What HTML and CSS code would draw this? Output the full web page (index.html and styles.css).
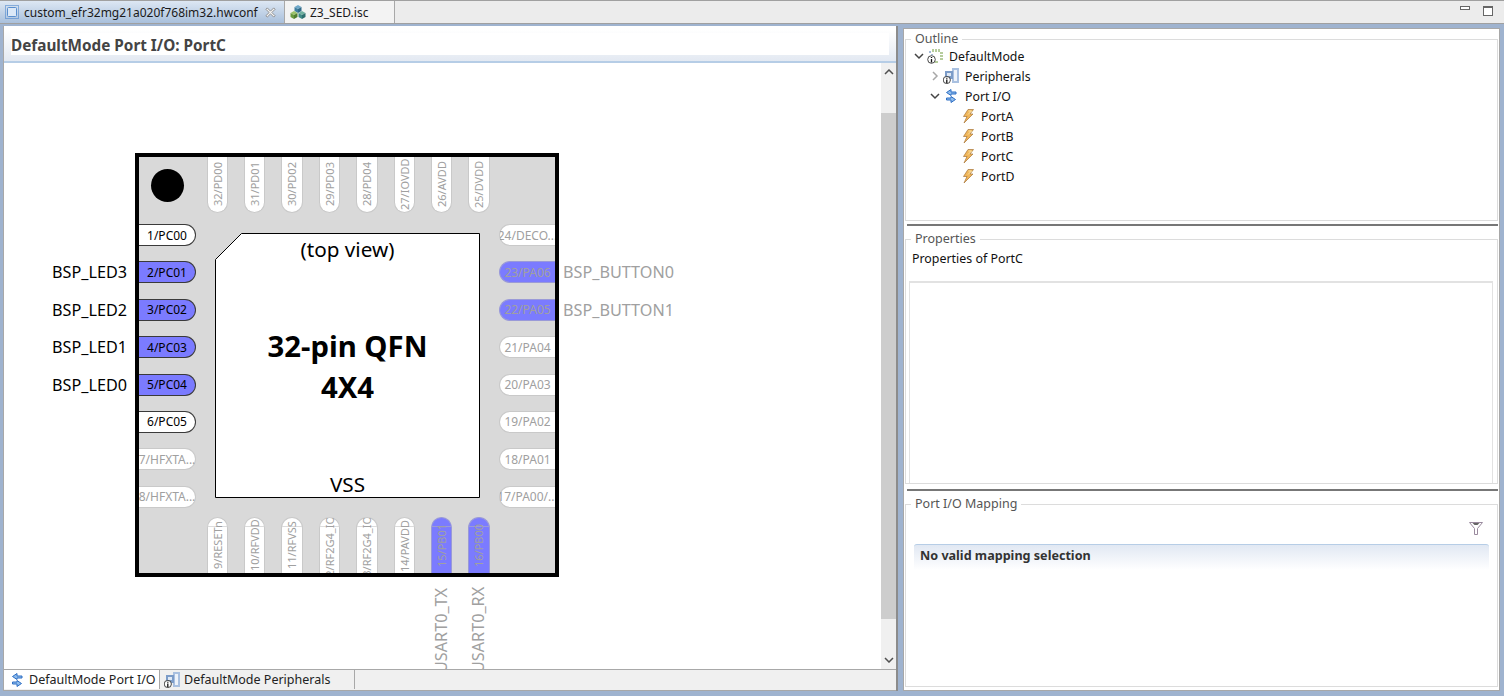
FILE: index.html
```html
<!DOCTYPE html>
<html lang="en">
<head>
<meta charset="utf-8">
<title>custom_efr32mg21a020f768im32.hwconf</title>
<link rel="stylesheet" href="styles.css">
</head>
<body>
<svg class="defs" width="0" height="0" aria-hidden="true">
  <symbol id="i-arrows" viewBox="0 0 16 16">
    <path d="M13 4H8V1.500L3.500 4.500 8 7.500V6h5z" fill="#8dbbec" stroke="#2f6fc4"/>
    <path d="M3.500 10H8V8.500L12.500 11.500 8 14.500V12H3.500z" fill="#8dbbec" stroke="#2f6fc4"/>
  </symbol>
  <symbol id="i-bolt" viewBox="0 0 16 16">
    <path d="M8 1.500h5.500L10 6h3L4 15l3-6.500H3.500z" fill="#f0b65a" stroke="#a8763a" stroke-width=".7"/>
    <path d="M8.500 3h3L8 6.500" fill="none" stroke="#f7e2a8"/>
  </symbol>
  <symbol id="i-periph" viewBox="0 0 16 16">
    <rect x="9" y="0" width="7" height="15" fill="#a9c0e0"/>
    <rect x="11" y="2" width="3" height="11" fill="#eef3fa"/>
    <rect x="2" y="3" width="8" height="8" fill="#7c9cc8"/>
    <rect x="4" y="5" width="4" height="3" fill="#dfe9f5"/>
    <circle cx="3.800" cy="12" r="3.600" fill="#fff" stroke="#333" stroke-width=".9"/>
    <path d="M3.800 9.800v1M3.800 11.500V15" stroke="#111" stroke-width="1.300"/>
  </symbol>
</svg>

<div class="app">
  <header class="tabbar">
    <div class="tab tab-active">
      <svg class="ico" viewBox="0 0 16 16"><rect x="1.500" y="1.500" width="13" height="13" fill="none" stroke="#3a7bc8" stroke-dasharray="1 1"/><rect x="3.500" y="3.500" width="9" height="9" rx="1" fill="#dbe8f7" stroke="#5a8fcf"/></svg>
      <span class="tab-text">custom_efr32mg21a020f768im32.hwconf</span>
      <svg class="close" viewBox="0 0 12 12"><path d="M2.500 1 6 4.500 9.500 1 11 2.500 7.500 6 11 9.500 9.500 11 6 7.500 2.500 11 1 9.500 4.500 6 1 2.500z" fill="#f4f4f4" stroke="#8a8a8a"/></svg>
    </div>
    <div class="tab tab-file">
      <svg class="ico" viewBox="0 0 16 16"><path d="M8 1l3.500 2L8 5 4.500 3z" fill="#6fa8c9"/><path d="M8 5v4L4.500 7V3z" fill="#3f7f9f"/><path d="M8 5l3.500-2v4L8 9z" fill="#2f6a88"/><path d="M4 7l3.500 2L4 11 .5 9z" fill="#9cc36a"/><path d="M4 11v4L.5 13V9z" fill="#6a9a3e"/><path d="M4 11l3.500-2v4L4 15z" fill="#4f7d2e"/><path d="M12 7l3.500 2L12 11 8.500 9z" fill="#6fb0a0"/><path d="M12 11v4L8.500 13V9z" fill="#3f8a86"/><path d="M12 11l3.500-2v4L12 15z" fill="#2c6e6e"/></svg>
      <span class="tab-text">Z3_SED.isc</span>
    </div>
    <div class="win-btns">
      <span class="win-min"></span>
      <span class="win-max"></span>
    </div>
  </header>

  <main class="workspace">
    <section class="editor">
      <div class="ed-head"><h1 class="ed-title">DefaultMode Port I/O: PortC</h1></div>
      <div class="ed-body">
        <div class="canvas">
          <div class="chip">
            <div class="dot"></div>

            <div class="row row-top">
              <div class="pin v"><span class="name">32/PD00</span></div>
              <div class="pin v"><span class="name">31/PD01</span></div>
              <div class="pin v"><span class="name">30/PD02</span></div>
              <div class="pin v"><span class="name">29/PD03</span></div>
              <div class="pin v"><span class="name">28/PD04</span></div>
              <div class="pin v"><span class="name">27/IOVDD</span></div>
              <div class="pin v"><span class="name">26/AVDD</span></div>
              <div class="pin v"><span class="name">25/DVDD</span></div>
            </div>

            <div class="col col-left">
              <div class="pin h act"><span class="name">1/PC00</span></div>
              <div class="pin h act used"><span class="name">2/PC01</span><span class="net">BSP_LED3</span></div>
              <div class="pin h act used"><span class="name">3/PC02</span><span class="net">BSP_LED2</span></div>
              <div class="pin h act used"><span class="name">4/PC03</span><span class="net">BSP_LED1</span></div>
              <div class="pin h act used"><span class="name">5/PC04</span><span class="net">BSP_LED0</span></div>
              <div class="pin h act"><span class="name">6/PC05</span></div>
              <div class="pin h"><span class="name">7/HFXTA...</span></div>
              <div class="pin h"><span class="name">8/HFXTA...</span></div>
            </div>

            <div class="col col-right">
              <div class="pin h"><span class="name">24/DECO...</span></div>
              <div class="pin h used"><span class="name">23/PA06</span><span class="net">BSP_BUTTON0</span></div>
              <div class="pin h used"><span class="name">22/PA05</span><span class="net">BSP_BUTTON1</span></div>
              <div class="pin h"><span class="name">21/PA04</span></div>
              <div class="pin h"><span class="name">20/PA03</span></div>
              <div class="pin h"><span class="name">19/PA02</span></div>
              <div class="pin h"><span class="name">18/PA01</span></div>
              <div class="pin h"><span class="name">17/PA00/...</span></div>
            </div>

            <div class="row row-bottom">
              <div class="pin v"><span class="name">9/RESETn</span></div>
              <div class="pin v"><span class="name">10/RFVDD</span></div>
              <div class="pin v"><span class="name">11/RFVSS</span></div>
              <div class="pin v"><span class="name">12/RF2G4_IO...</span></div>
              <div class="pin v"><span class="name">13/RF2G4_IO...</span></div>
              <div class="pin v"><span class="name">14/PAVDD</span></div>
              <div class="pin v used"><span class="name">15/PB01</span><span class="net">USART0_TX</span></div>
              <div class="pin v used"><span class="name">16/PB00</span><span class="net">USART0_RX</span></div>
            </div>

            <div class="body">
              <svg class="body-shape" viewBox="0 0 265 265"><polygon points="26.500,.5 264.500,.5 264.500,264.500 .5,264.500 .5,26.500" fill="#fff" stroke="#000"/></svg>
              <div class="body-top">(top view)</div>
              <div class="body-mid"><div>32-pin QFN</div><div>4X4</div></div>
              <div class="body-bot">VSS</div>
            </div>
          </div>
        </div>
        <div class="scrollbar">
          <svg class="sb-arrow" viewBox="0 0 10 6"><path d="M1 5l4-4 4 4" fill="none" stroke="#505050" stroke-width="1.500"/></svg>
          <div class="sb-thumb"></div>
          <svg class="sb-arrow" viewBox="0 0 10 6"><path d="M1 1l4 4 4-4" fill="none" stroke="#505050" stroke-width="1.500"/></svg>
        </div>
      </div>
      <nav class="ed-tabs">
        <div class="btab btab-active"><svg class="ico"><use href="#i-arrows"/></svg><span>DefaultMode Port I/O</span></div>
        <div class="btab"><svg class="ico"><use href="#i-periph"/></svg><span>DefaultMode Peripherals</span></div>
      </nav>
    </section>

    <aside class="side">
      <div class="pane pane-outline">
        <fieldset class="group">
          <legend>Outline</legend>
          <ul class="tree">
            <li class="node l0"><svg class="chev" viewBox="0 0 10 10"><path d="M1 3l4 4 4-4" fill="none" stroke="#444" stroke-width="1.500"/></svg>
              <svg class="ico" viewBox="0 0 16 16"><path d="M6 1v3M9 1v3M12 1v3M13 5h3M13 8h3M13 11h3M8 14h3" stroke="#6f9a3a"/><path d="M2 4h2M5 6v1" stroke="#4a78b0"/><circle cx="4.500" cy="11.500" r="3.800" fill="#fff" stroke="#333" stroke-width=".9"/><path d="M4.500 9v1M4.500 11v3.500" stroke="#111" stroke-width="1.300"/></svg>
              <span>DefaultMode</span></li>
            <li class="node l1"><svg class="chev" viewBox="0 0 10 10"><path d="M3 1l4 4-4 4" fill="none" stroke="#a8a8a8" stroke-width="1.500"/></svg><svg class="ico"><use href="#i-periph"/></svg><span>Peripherals</span></li>
            <li class="node l1"><svg class="chev" viewBox="0 0 10 10"><path d="M1 3l4 4 4-4" fill="none" stroke="#444" stroke-width="1.500"/></svg><svg class="ico"><use href="#i-arrows"/></svg><span>Port I/O</span></li>
            <li class="node l2"><svg class="ico"><use href="#i-bolt"/></svg><span>PortA</span></li>
            <li class="node l2"><svg class="ico"><use href="#i-bolt"/></svg><span>PortB</span></li>
            <li class="node l2"><svg class="ico"><use href="#i-bolt"/></svg><span>PortC</span></li>
            <li class="node l2"><svg class="ico"><use href="#i-bolt"/></svg><span>PortD</span></li>
          </ul>
        </fieldset>
      </div>
      <div class="sash"></div>
      <div class="pane pane-props">
        <fieldset class="group">
          <legend>Properties</legend>
          <p class="props-text">Properties of PortC</p>
          <div class="props-box"></div>
        </fieldset>
      </div>
      <div class="sash"></div>
      <div class="pane pane-map">
        <fieldset class="group">
          <legend>Port I/O Mapping</legend>
          <div class="map-tools">
            <svg class="filter" viewBox="0 0 14 13"><path d="M.5 .5h13L8.500 6.500v6h-3v-6z" fill="#fff" stroke="#9a8a9e"/><path d="M3.500 1h7l-2 2h-3z" fill="#666"/></svg>
          </div>
          <div class="map-head">No valid mapping selection</div>
        </fieldset>
      </div>
    </aside>
  </main>
</div>
</body>
</html>
```
FILE: styles.css
```css
* { box-sizing: border-box; }
html, body { margin: 0; padding: 0; }
body { font-family: "Noto Sans", "Open Sans", "Liberation Sans", sans-serif; font-size: 12.3px; color: #000; overflow: hidden; }
.defs { position: absolute; }
ul { margin: 0; padding: 0; list-style: none; }
h1, p { margin: 0; }

.app { width: 1504px; height: 696px; display: flex; flex-direction: column; background: #9fb3cf; overflow: hidden; }

/* top tabs */
.tabbar { height: 24px; flex: none; display: flex; align-items: stretch; background: #ececec; border-top: 1px solid #a0a0a0; border-bottom: 1px solid #a0a0a0; }
.tab { display: flex; align-items: center; height: 22px; border-right: 1px solid #a8a8a8; }
.tab-active { width: 285px; padding-left: 4px; background: linear-gradient(#dde7f3, #a9c0dc); }
.tab-file { width: 110px; padding-left: 5px; background: #f3f3f3; }
.ico { width: 16px; height: 16px; flex: none; }
.tab-text { font-size: 12px; margin-left: 4px; white-space: nowrap; color: #1a1a1a; }
.close { width: 11px; height: 11px; margin-left: 7px; flex: none; }
.win-btns { margin-left: auto; display: flex; align-items: flex-start; gap: 13px; padding: 5px 11px 0 0; }
.win-min { width: 10px; height: 4px; border: 1px solid #666; background: #fff; }
.win-max { width: 10px; height: 10px; border: 1px solid #666; border-top-width: 2px; background: #fff; }

/* workspace */
.workspace { flex: 1; min-height: 0; display: flex; padding: 2px 4px 5px 3px; }
.editor { width: 895px; flex: none; display: flex; flex-direction: column; background: #fff; border-left: 1px solid #a8a8a8; border-right: 2px solid #8c8c8c; }
.ed-head { height: 37px; flex: none; padding: 7px 0 7px 7px; background: linear-gradient(#fff, #fff 10%, #e3e9f2); border-bottom: 2px solid #b6cde6; }
.ed-title { width: 878px; height: 22px; background: #fff; font-size: 15.300px; font-weight: 700; line-height: 25px; color: #444; white-space: nowrap; }
.ed-body { flex: 1; min-height: 0; display: flex; }
.canvas { flex: 1; min-width: 0; padding: 90px 0 0 131px; overflow: hidden; background: #fff; }
.scrollbar { width: 15px; flex: none; display: flex; flex-direction: column; align-items: stretch; background: #f0f0f0; }
.sb-arrow { width: 10px; height: 6px; flex: none; margin: 6px auto 38px; }
.sb-arrow:last-child { margin: 38px auto 6px; }
.sb-thumb { flex: 1; background: #cdcdcd; }

.ed-tabs { height: 22px; flex: none; display: flex; padding-bottom: 1px; font-size: 12.500px; background: #f0f0f0; border-top: 1px solid #a8a8a8; border-bottom: 1px solid #a8a8a8; }
.btab { display: flex; align-items: center; width: 195px; padding-left: 4px; border-right: 1px solid #a8a8a8; color: #222; }
.btab span { margin-left: 4px; white-space: nowrap; }
.btab-active { width: 156px; padding-left: 5px; background: #fff; border-right: 1px solid #a8a8a8; }

/* chip diagram */
.chip { position: relative; width: 424px; height: 424px; flex: none; background: #d9d9d9; border: 4px solid #000; }
.dot { position: absolute; left: 12px; top: 12px; width: 33px; height: 33px; border-radius: 50%; background: #000; }
.row { position: absolute; left: 67.600px; display: flex; gap: 16px; }
.row-top { top: 0; }
.row-bottom { bottom: 0; }
.col { position: absolute; top: 67px; display: flex; flex-direction: column; gap: 15.400px; }
.col-left { left: 0; }
.col-right { right: 0; }

.pin { position: relative; flex: none; display: flex; background: #fff; color: #a0a0a0; font-size: 12px; border: 1px solid #c9c9c9; }
.pin.h { width: 57px; height: 22px; }
.col-right .pin.h { width: 56px; }
.pin.v { width: 21.400px; height: 56px; font-size: 11px; }
.name { flex: 1; min-width: 0; min-height: 0; display: flex; align-items: center; justify-content: center; overflow: hidden; white-space: nowrap; }
.v .name { writing-mode: vertical-rl; transform: rotate(180deg); }
.col-left .pin { border-left: 0; border-radius: 0 11px 11px 0; }
.col-right .pin { border-right: 0; border-radius: 11px 0 0 11px; }
.row-top .pin { border-top: 0; border-radius: 0 0 11px 11px; }
.row-bottom .pin { border-bottom: 0; border-radius: 11px 11px 0 0; }
.row-bottom .pin::before { content: ""; position: absolute; left: 0; right: 0; top: 8px; height: 1px; background: #dcdcdc; }
.used { background: #7b7bff; border-color: #9a9ad8; }
.row-bottom .used::before { background: #9a9ad8; }
.pin.act { color: #000; border-color: #3a3a3a; }
.used.act { background: #7b7bff; }
.net { position: absolute; font-size: 16.200px; white-space: nowrap; color: #a0a0a0; }
.act .net { color: #000; }
.col-left .net { right: calc(100% + 12px); top: -1px; line-height: 22px; }
.col-right .net { left: calc(100% + 8px); top: -1px; line-height: 22px; }
.row-bottom .net { writing-mode: vertical-rl; transform: rotate(180deg); left: -1px; top: calc(100% + 10px); width: 21px; line-height: 21px; text-align: left; height: 90px; }

.body { position: absolute; left: 76px; top: 76px; width: 265px; height: 265px; display: flex; flex-direction: column; align-items: center; font-size: 20.700px; line-height: 24px; }
.body-shape { position: absolute; inset: 0; width: 100%; height: 100%; }
.body-top, .body-mid, .body-bot { position: relative; }
.body-top { margin-top: 4px; }
.body-mid { margin-top: 65px; font-size: 29.300px; font-weight: 700; line-height: 41px; text-align: center; }
.body-bot { margin-top: auto; margin-bottom: 2px; }

/* right side */
.side { flex: 1; min-width: 0; margin-left: 5px; margin-top: 2px; display: flex; flex-direction: column; background: #fff; border: 1px solid #a8a8a8; }
.pane { display: flex; padding: 0 1px; }
.pane-outline { height: 195px; padding-top: 2px; padding-bottom: 3px; }
.pane-props { height: 263px; padding-top: 5px; padding-bottom: 5px; }
.pane-map { flex: 1; min-height: 0; padding-top: 5px; padding-bottom: 3px; }
.sash { height: 2px; flex: none; background: #777; margin: 0 1px 0 3px; }
.group { flex: 1; min-width: 0; margin: 0; padding: 0; border: 1px solid #dcdcdc; display: flex; flex-direction: column; }
legend { margin-left: 5px; padding: 0 4px; font-size: 12.500px; line-height: 16px; color: #555; }
.tree { margin-top: -1px; }
.node { height: 20px; display: flex; align-items: center; white-space: nowrap; color: #111; }
.node .chev { width: 10px; height: 10px; flex: none; margin-right: 3px; }
.node .ico { margin-right: 6px; }
.l0 { padding-left: 8px; }
.l1 { padding-left: 24px; }
.l2 { padding-left: 54px; }
.l2 .ico { margin-right: 5px; }
.props-text { padding: 2px 0 0 6px; line-height: 20px; font-size: 12.400px; color: #111; }
.props-box { margin: 12px 4px 0 3px; flex: 1; border-top: 2px solid #e2e2e2; border-left: 1px solid #e2e2e2; border-right: 1px solid #e2e2e2; }
.map-tools { display: flex; justify-content: flex-end; padding: 10px 14px 0 0; height: 32px; }
.filter { width: 14px; height: 13px; }
.map-head { margin: 0 8px; height: 26px; padding-left: 6px; font-size: 12.600px; font-weight: 700; line-height: 22px; color: #333; background: linear-gradient(#e1e8f3, #fff); border-top: 1px solid #b6cde6; border-radius: 3px 3px 0 0; }
```
